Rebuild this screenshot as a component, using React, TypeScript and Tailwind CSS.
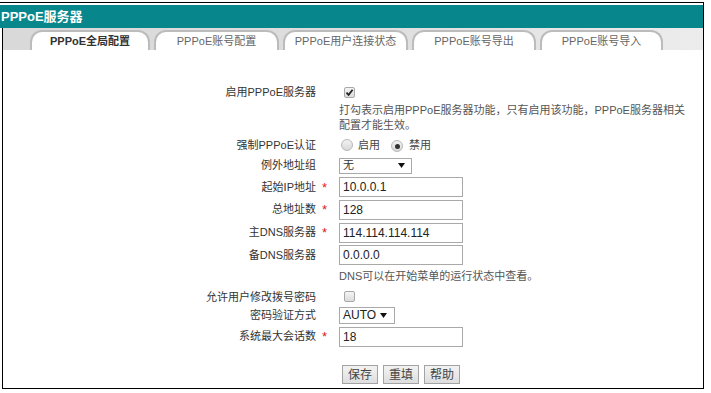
import React from "react";

const FONT = "[font-family:'Liberation_Sans','Noto_Sans_CJK_SC',sans-serif]";

const tabs = [
  { label: "PPPoE全局配置", w: "w-[120px]", active: true },
  { label: "PPPoE账号配置", w: "w-[125px]" },
  { label: "PPPoE用户连接状态", w: "w-[125px]" },
  { label: "PPPoE账号导出", w: "w-[124px]" },
  { label: "PPPoE账号导入", w: "w-[123px]" },
];

const Check = ({ checked }: { checked?: boolean }) => (
  <span className="inline-flex w-[11px] h-[11px] items-center justify-center rounded-[2px] border border-[#a8a8a8] bg-gradient-to-b from-[#f4f4f4] to-[#dcdcdc]">
    {checked && (
      <svg width="9" height="9" viewBox="0 0 9 9">
        <path d="M1.5 4.6 L3.6 6.8 L7.6 1.8" fill="none" stroke="#222" strokeWidth="1.8" />
      </svg>
    )}
  </span>
);

const Radio = ({ on }: { on?: boolean }) => (
  <span className="inline-flex w-[12px] h-[12px] items-center justify-center rounded-full border border-[#b8b8b8] bg-gradient-to-b from-[#f2f2f2] to-[#d8d8d8]">
    {on && <span className="w-[5px] h-[5px] rounded-full bg-[#333]" />}
  </span>
);

const Caret = () => (
  <svg width="7" height="5" viewBox="0 0 7 5">
    <path d="M0 0 H7 L3.5 5 Z" fill="#111" />
  </svg>
);

const Row = ({
  label,
  star,
  h,
  children,
}: {
  label?: string;
  star?: boolean;
  h: string;
  children?: React.ReactNode;
}) => (
  <div className={`grid grid-cols-[316px_23px_1fr] items-center ${h}`}>
    <div className="text-right text-[11px] text-[#333]">{label}</div>
    <div className="pl-[6px] text-[13px] text-[#e02020] leading-none">{star ? "*" : ""}</div>
    <div className="flex items-center">{children}</div>
  </div>
);

const TextInput = ({ value }: { value: string }) => (
  <div className="w-[124px] h-[20px] border border-[#a9a9a9] bg-white px-[3px] flex items-center text-[12px] text-[#222]">
    {value}
  </div>
);

const Btn = ({ children }: { children: React.ReactNode }) => (
  <div className="h-[19px] w-[36px] flex items-center justify-center border border-[#a3a3a3] bg-gradient-to-b from-[#f3f3f3] to-[#dedede] text-[12px] text-[#444]">
    {children}
  </div>
);

export default function App() {
  return (
    <div className={`w-[711px] h-[393px] bg-white overflow-hidden ${FONT}`}>
      <div className="h-[2px]" />
      <div className="h-px w-[704px] bg-black" />
      <div className="h-[2px] w-[704px] border-r border-black" />
      {/* header */}
      <div className="h-[23px] w-[704px] bg-[#07878b] border-r border-black flex items-center pl-[1px] text-white text-[13px] font-bold">
        PPPoE服务器
      </div>

      <div className="ml-[2px] w-[702px] h-[361px] border-l border-r border-b border-black">
        {/* tabs */}
        <div className="h-[22px] flex items-end gap-[4px] pl-[27px] bg-gradient-to-r from-[#d9d9d9] via-[#dedede] to-[#ececec]">
          {tabs.map((t) => (
            <div
              key={t.label}
              className={`${t.w} h-[20px] flex items-center justify-center rounded-t-[12px] border-2 border-b-0 border-[#bcbcbc] bg-white text-[11px] ${
                t.active ? "font-bold text-[#333]" : "text-[#666]"
              }`}
            >
              {t.label}
            </div>
          ))}
        </div>

        {/* form */}
        <div className="pt-[30px] -ml-[3px]">
          <Row label="启用PPPoE服务器" h="h-[20px]">
            <span className="pl-[5px]">
              <Check checked />
            </span>
          </Row>
          <div className="grid grid-cols-[316px_23px_1fr] h-[35px] pt-[3px]">
            <div />
            <div />
            <div className="w-[350px] text-[11px] leading-[15px] text-[#555]">
              打勾表示启用PPPoE服务器功能，只有启用该功能，PPPoE服务器相关配置才能生效。
            </div>
          </div>
          <Row label="强制PPPoE认证" h="h-[20px]">
            <div className="flex items-center text-[11px] text-[#444] pl-[2px]">
              <Radio />
              <span className="ml-[5px]">启用</span>
              <span className="ml-[11px]">
                <Radio on />
              </span>
              <span className="ml-[6px]">禁用</span>
            </div>
          </Row>
          <Row label="例外地址组" h="h-[21px]">
            <div className="w-[73px] h-[16px] border border-[#a9a9a9] flex items-center justify-between px-[3px] text-[11px] text-[#333]">
              <span>无</span>
              <span className="pr-[3px]">
                <Caret />
              </span>
            </div>
          </Row>
          <Row label="起始IP地址" star h="h-[22px]">
            <TextInput value="10.0.0.1" />
          </Row>
          <Row label="总地址数" star h="h-[23px]">
            <TextInput value="128" />
          </Row>
          <Row label="主DNS服务器" star h="h-[23px]">
            <TextInput value="114.114.114.114" />
          </Row>
          <Row label="备DNS服务器" h="h-[22px]">
            <TextInput value="0.0.0.0" />
          </Row>
          <div className="grid grid-cols-[316px_23px_1fr] h-[18px] items-center mt-[1px]">
            <div />
            <div />
            <div className="text-[11px] text-[#555]">DNS可以在开始菜单的运行状态中查看。</div>
          </div>
          <Row label="允许用户修改拨号密码" h="h-[19px]">
            <span className="pl-[5px]">
              <Check />
            </span>
          </Row>
          <Row label="密码验证方式" h="h-[22px]">
            <div className="w-[56px] h-[17px] border border-[#a9a9a9] flex items-center justify-between px-[3px] text-[12px] text-[#222]">
              <span>AUTO</span>
              <span className="pr-[4px]">
                <Caret />
              </span>
            </div>
          </Row>
          <Row label="系统最大会话数" star h="h-[21px]">
            <TextInput value="18" />
          </Row>
          <div className="grid grid-cols-[316px_23px_1fr] mt-[18px]">
            <div />
            <div />
            <div className="flex gap-[5px] pl-[3px]">
              <Btn>保存</Btn>
              <Btn>重填</Btn>
              <Btn>帮助</Btn>
            </div>
          </div>
        </div>
      </div>
    </div>
  );
}
